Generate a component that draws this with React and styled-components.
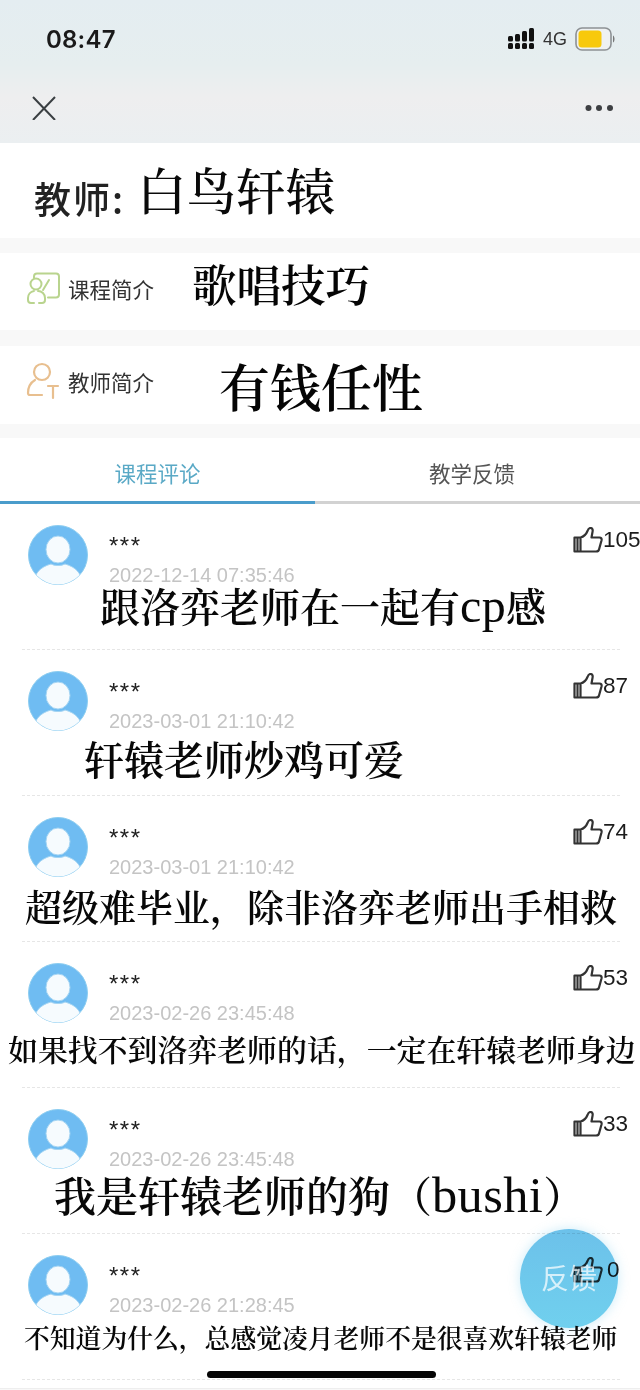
import React from 'react';
import styled, { createGlobalStyle } from 'styled-components';

const Global = createGlobalStyle`
  html, body { margin: 0; padding: 0; background: #fff; }
  body { font-family: "Liberation Sans", "Noto Sans CJK SC", sans-serif; }
  * { box-sizing: border-box; }
`;
const Page = styled.div`
  position: relative; width: 640px; height: 1390px; overflow: hidden; background: #f8f8f8;
`;
const Header = styled.header`
  height: 143px; padding: 24px 24px 0 32px; display: flex; flex-direction: column;
  background: linear-gradient(180deg, #e4edf1 0%, #e6eeef 45%, #eeeeef 68%, #ebeff1 100%);
`;
const StatusBar = styled.div`
  display: flex; align-items: center; justify-content: space-between; padding-left: 14px; height: 30px;
`;
const Time = styled.span`
  font-family: Inter, sans-serif; font-size: 24px; font-weight: 600; color: #1a1a1a; letter-spacing: .2px;
`;
const StatusIcons = styled.div`display: flex; align-items: center; gap: 8px;`;
const Net = styled.span`font-size: 18px; color: #333; font-family: "Liberation Sans", sans-serif;`;
const NavBar = styled.div`
  margin-top: 42px; display: flex; align-items: center; justify-content: space-between; padding-right: 3px;
`;
const TeacherCard = styled.section`
  height: 95px; background: #fff; display: flex; align-items: center; padding: 0 0 2px 34px;
`;
const TeacherLabel = styled.span`
  font: 500 37px/1 "Noto Sans CJK SC", sans-serif; color: #222; margin-top: 17px; white-space: nowrap; letter-spacing: 2px;
`;
const TeacherName = styled.span`
  font: 500 49.500px/1 "Noto Serif CJK SC", "Noto Sans CJK SC", sans-serif; color: #0a0a0a; margin-left: 12px; margin-bottom: 2px;
`;
const InfoRow = styled.section`
  height: ${p => p.$h}px; margin-top: ${p => p.$mt}px; background: #fff;
  display: flex; align-items: center; padding-left: 25px;
`;
const InfoIcon = styled.div`display: flex; margin-bottom: ${p => p.$mb}px;`;
const InfoLabel = styled.span`
  font: 400 21.5px/1 "Noto Sans CJK SC", sans-serif; color: #333; margin-left: 7px; margin-bottom: 6px; white-space: nowrap;
`;
const InfoValue = styled.span`
  font: 600 ${p => p.$size}px/1 "Noto Serif CJK SC", "Noto Sans CJK SC", sans-serif; color: #050505;
  margin-left: ${p => p.$ml}px; margin-bottom: ${p => p.$mb}px; white-space: nowrap;
`;
const Tabs = styled.nav`
  margin-top: 14px; height: 66px; display: flex; background: #fff;
`;
const Tab = styled.div`
  width: ${p => p.$w}px; display: flex; align-items: center; justify-content: center;
  padding: 6px ${p => p.$pr}px 0 0;
  font: 400 21.5px/1 "Noto Sans CJK SC", sans-serif; color: ${p => p.$active ? '#5aa9c6' : '#555'};
  border-bottom: 3px solid ${p => p.$active ? '#4a9ccb' : '#d2d2d2'};
`;
const List = styled.main`background: #fff; height: 885px; border-bottom: 1px solid #eee;`;
const CommentRow = styled.article`
  position: relative; height: 146px; margin: 0 20px 0 22px; padding: 21px 0 0 6px;
  border-bottom: 1px dashed #e6e6e6;
`;
const Top = styled.div`display: flex;`;
const Meta = styled.div`
  margin-left: 21px; flex: 1; display: flex; flex-direction: column; padding-top: 11px;
`;
const Name = styled.span`
  font: 400 24px/20px "Liberation Sans", sans-serif; color: #222; height: 20px; letter-spacing: 1.5px;
`;
const DateText = styled.span`
  font: 400 20px/16px "Liberation Sans", sans-serif; color: #c4c4c4; margin-top: 11px;
`;
const Like = styled.div`
  position: absolute; top: 22px; left: 551px; display: flex; align-items: center; white-space: nowrap;
`;
const LikeCount = styled.span`
  font: 400 22.500px/28px "Liberation Sans", sans-serif; color: #1c1c1c; margin-left: ${p => p.$ml}px;
`;
const Remark = styled.p`
  margin: ${p => p.$mt}px 0 0 ${p => p.$ml}px; white-space: nowrap;
  font: 600 ${p => p.$size}px/1 "Noto Serif CJK SC", "Noto Sans CJK SC", serif; color: #080808;
`;
const Latin = styled.span`
  font-family: "Liberation Serif", serif; font-weight: 400; font-size: 1.2em; line-height: 0; letter-spacing: .4px;
`;
const Feedback = styled.div`
  position: absolute; left: 520px; top: 1229px; width: 98px; height: 99px; border-radius: 50%;
  display: flex; align-items: center; justify-content: center; padding-bottom: 4px;
  font: 400 28px/1 "Noto Sans CJK SC", sans-serif; color: rgba(255,255,255,.72);
  &::before {
    content: ""; position: absolute; inset: 0; border-radius: 50%; z-index: 0;
    background: linear-gradient(180deg, #6cc1ea, #70d0ee);
    mix-blend-mode: multiply; box-shadow: 0 0 12px rgba(110,200,235,.35);
  }
`;
const FeedbackText = styled.span`position: relative;`;
const HomeBar = styled.div`
  position: absolute; left: 207px; top: 1371px; width: 229px; height: 7px; border-radius: 4px; background: #050505;
`;

const Signal = () => (
  <svg width="27" height="22" viewBox="0 0 27 22" fill="#111">
    <rect x="0" y="8" width="5" height="5.500" rx="1.500" /><rect x="0" y="15" width="5" height="6" rx="1.500" />
    <rect x="7" y="6" width="5" height="7.500" rx="1.500" /><rect x="7" y="15" width="5" height="6" rx="1.500" />
    <rect x="14" y="3" width="5" height="10.500" rx="1.500" /><rect x="14" y="15" width="5" height="6" rx="1.500" />
    <rect x="21" y="0" width="5" height="13.500" rx="1.500" /><rect x="21" y="15" width="5" height="6" rx="1.500" />
  </svg>
);
const Battery = () => (
  <svg width="41" height="24" viewBox="0 0 41 24">
    <rect x="1" y="1" width="35" height="22" rx="6" fill="#eef1f2" stroke="#8d9194" strokeWidth="1.600" />
    <rect x="3.500" y="3.500" width="23" height="17" rx="3.500" fill="#f8c90c" />
    <path d="M38 8.500c2 1 2 6 0 7z" fill="#777" />
  </svg>
);
const Close = () => (
  <svg width="24" height="24" viewBox="0 0 24 24" stroke="#3a3f42" strokeWidth="2" fill="none">
    <path d="M1 1l22 23M23 1L1 24" />
  </svg>
);
const More = () => (
  <svg width="28" height="8" viewBox="0 0 28 8" fill="#3d3f42">
    <circle cx="3.500" cy="4" r="3" /><circle cx="14" cy="4" r="3" /><circle cx="25" cy="4" r="3" />
  </svg>
);
const CourseIcon = () => (
  <svg width="36" height="40" viewBox="0 0 36 40" fill="none" stroke="#b9d48e" strokeWidth="2" strokeLinecap="round" strokeLinejoin="round">
    <path d="M9 8V6.500a3 3 0 0 1 3-3h19a3 3 0 0 1 3 3v18a3 3 0 0 1-3 3h-8" />
    <path d="M24 10l-6 10" />
    <circle cx="11" cy="14" r="5.500" />
    <path d="M9 33H6a3 3 0 0 1-3-3v-2a7 7 0 0 1 6-7M13 21a7 7 0 0 1 7 7v2a3 3 0 0 1-3 3h-3" />
  </svg>
);
const TeacherIcon = () => (
  <svg width="36" height="42" viewBox="0 0 36 42" fill="none" stroke="#e8bf8f" strokeWidth="2.200" strokeLinecap="round" strokeLinejoin="round">
    <circle cx="17" cy="10" r="8" />
    <path d="M10 18C5 21 3 26 3 31a2 2 0 0 0 2 2h12M23 24h10M28 24v12" />
  </svg>
);
const Avatar = () => (
  <svg width="60" height="60" viewBox="0 0 60 60">
    <defs><clipPath id="avatarClip"><circle cx="30" cy="30" r="29.500" /></clipPath></defs>
    <circle cx="30" cy="30" r="29.500" fill="#6fbcf2" stroke="#8ccdf0" strokeWidth="1" />
    <g clipPath="url(#avatarClip)">
      <ellipse cx="30" cy="24.500" rx="12" ry="13.500" fill="#f6fbfe" stroke="#a4d4f2" strokeWidth="1" />
      <path d="M7 57c-1-8 5-15 16-18 3 2 11 2 14 0 11 3 17 10 16 18-5 3-14 4-23 4s-18-1-23-4z" fill="#f6fbfe" stroke="#a4d4f2" strokeWidth="1" />
    </g>
  </svg>
);
const Thumb = () => (
  <svg width="30" height="26" viewBox="0 0 30 26" fill="none" stroke="#333" strokeWidth="2.200" strokeLinejoin="round">
    <path d="M1.500 10.500h6v14h-6zM7.500 10.500c4-1 6-4 7-6.500.5-1.500 1-3 3-3s2.500 2 2 4l-1 5.500h8c1.500 0 2.500 1 2 3l-2.500 9c-.3 1.500-1.500 2-3 2H7.500" />
    <path d="M4.500 10.500v14" />
  </svg>
);

const comments = [
  { count: '105', date: '2022-12-14 07:35:46', text: ['跟洛弈老师在一起有', 'cp', '感'], size: 40, left: 72, mt: 0 },
  { count: '87', date: '2023-03-01 21:10:42', text: ['轩辕老师炒鸡可爱'], size: 40, left: 56, mt: 7 },
  { count: '74', date: '2023-03-01 21:10:42', text: ['超级难毕业，除非洛弈老师出手相救'], size: 37, left: -3, mt: 11 },
  { count: '53', date: '2023-02-26 23:45:48', text: ['如果找不到洛弈老师的话，一定在轩辕老师身边'], size: 29.9, left: -20, mt: 11 },
  { count: '33', date: '2023-02-26 23:45:48', text: ['我是轩辕老师的狗（', 'bushi', '）'], size: 42, left: 26, mt: 4 },
  { count: '0', gap: 4, date: '2023-02-26 21:28:45', text: ['不知道为什么，总感觉凌月老师不是很喜欢轩辕老师'], size: 25.8, left: -4, mt: 9 },
];

export default function App() {
  return (
    <Page>
      <Global />
      <Header>
        <StatusBar>
          <Time>08:47</Time>
          <StatusIcons><Signal /><Net>4G</Net><Battery /></StatusIcons>
        </StatusBar>
        <NavBar><Close /><More /></NavBar>
      </Header>
      <TeacherCard>
        <TeacherLabel>教师:</TeacherLabel>
        <TeacherName>白鸟轩辕</TeacherName>
      </TeacherCard>
      <InfoRow $h={77} $mt={15}>
        <InfoIcon $mb={4}><CourseIcon /></InfoIcon>
        <InfoLabel>课程简介</InfoLabel>
        <InfoValue $size={44.5} $ml={38} $mb={16}>歌唱技巧</InfoValue>
      </InfoRow>
      <InfoRow $h={78} $mt={16}>
        <InfoIcon $mb={4}><TeacherIcon /></InfoIcon>
        <InfoLabel>教师简介</InfoLabel>
        <InfoValue $size={51} $ml={65} $mb={0}>有钱任性</InfoValue>
      </InfoRow>
      <Tabs>
        <Tab $active $w={315} $pr={0}>课程评论</Tab>
        <Tab $w={325} $pr={11}>教学反馈</Tab>
      </Tabs>
      <List>
        {comments.map((c, i) => (
          <CommentRow key={i}>
            <Top>
              <Avatar />
              <Meta>
                <Name>***</Name>
                <DateText>{c.date}</DateText>
              </Meta>
            </Top>
            <Like><Thumb /><LikeCount $ml={c.gap ?? 0}>{c.count}</LikeCount></Like>
            <Remark $size={c.size} $ml={c.left} $mt={c.mt}>
              {c.text[0]}
              {c.text[1] && <Latin>{c.text[1]}</Latin>}
              {c.text[2]}
            </Remark>
          </CommentRow>
        ))}
      </List>
      <Feedback><FeedbackText>反馈</FeedbackText></Feedback>
      <HomeBar />
    </Page>
  );
}
